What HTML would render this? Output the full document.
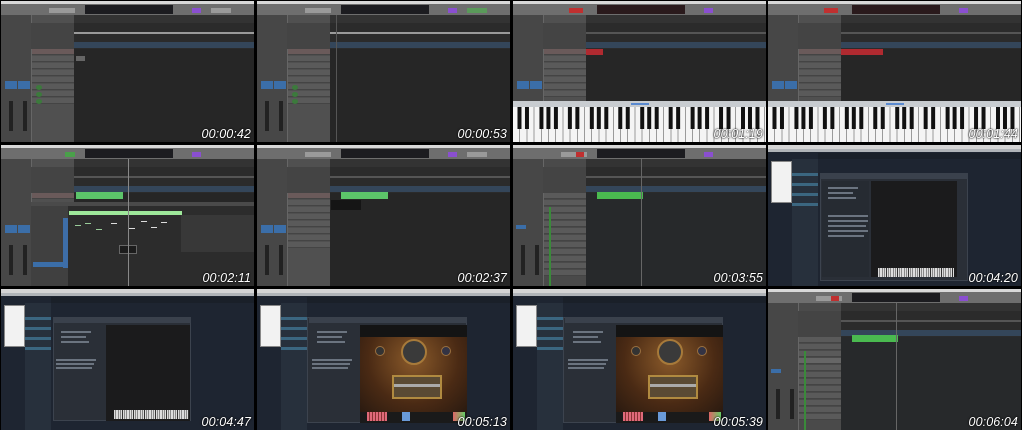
<!DOCTYPE html>
<html><head><meta charset="utf-8"><style>
*{margin:0;padding:0;box-sizing:border-box}
body{width:1022px;height:429px;background:#000;position:relative;overflow:hidden;font-family:"Liberation Sans",sans-serif}
.c{position:absolute;width:253px;height:141px;overflow:hidden;background:#262626}
.a{position:absolute}
.ts{position:absolute;right:3px;bottom:1px;color:#fff;font-style:italic;font-size:12.5px;letter-spacing:0.1px;text-shadow:0 0 2px #000,0 0 1px #000}
.mb{left:0;top:0;width:253px;height:3px;background:#d8d8d8}
.tb{left:0;top:3px;width:253px;height:11px;background:#6e6e6e}
.lcd{left:84px;top:4px;width:88px;height:9px;background:#1c1c20}
.pur{left:191px;top:7px;width:9px;height:5px;background:#8a4fd0}
.tbb{top:7px;height:5px;background:#9a9a9a}
.ins{left:0;top:14px;width:30px;height:127px;background:#474747}
.trk{left:30px;top:14px;width:43px;height:127px;background:#505050;border-left:1px solid #666}
.trh{left:30px;top:22px;width:43px;height:26px;background:#444}
.rul{left:73px;top:14px;width:180px;height:8px;background:#333}
.glo{left:73px;top:22px;width:180px;height:26px;background:#2b2b2b}
.gl1{left:73px;top:31px;width:180px;height:2px;background:#555}
.blu{left:73px;top:41px;width:180px;height:6px;background:#34465a}
.row{left:31px;height:6px;width:42px;background:#5a5a5a;border-bottom:1px solid #444}
.led{left:35px;width:6px;height:5px;border-radius:50%;background:#3c7a3c}
.fad{top:100px;width:4px;height:30px;background:#222}
.bbtn{top:80px;width:12px;height:8px;background:#3b6ea8}
.pia{left:0;top:100px;width:253px;height:41px;background:#c8ccd0}
.keys{left:0;top:106px;width:253px;height:35px;background:
linear-gradient(to right,transparent 0 4.7px,#111 4.7px 8.7px,transparent 8.7px 12px,#111 12px 16px,transparent 16px 26.3px,#111 26.3px 30.3px,transparent 30.3px 33.5px,#111 33.5px 37.5px,transparent 37.5px 40.7px,#111 40.7px 44.7px,transparent 44.7px) 0 0/50.4px 22px repeat-x,
repeating-linear-gradient(to right,#f4f4f4 0 6.2px,#9a9a9a 6.2px 7.2px)}
.k{background:#1e2531}
.kmb{left:0;top:0;width:253px;height:4px;background:#d4d4d4}
.kmb2{left:0;top:4px;width:253px;height:3px;background:#b0b4b8}
.kwh{left:3px;top:16px;width:21px;height:42px;background:#f2f2f2;border:1px solid #888}
.kcol{left:24px;top:14px;width:26px;height:127px;background:#27303c}
.kbar{left:50px;top:8px;width:203px;height:6px;background:#1a2029}
.kmh{left:52px;top:28px;width:148px;height:6px;background:#3a414c}
.kl{height:2px;background:#6b7480}
.kblk{left:103px;top:36px;width:86px;height:96px;background:#1b1b1c}
.kpi{left:110px;top:123px;width:76px;height:9px;background:repeating-linear-gradient(to right,#ddd 0 1.6px,#333 1.6px 2.2px)}
.side{left:24px;width:26px;height:3px;background:#3b6680}
</style></head><body>

<div class="c" style="left:1px;top:1px">
<div class="a mb"></div><div class="a tb"></div><div class="a lcd"></div><div class="a pur"></div>
<div class="a tbb" style="left:48px;width:26px"></div><div class="a tbb" style="left:210px;width:20px"></div>
<div class="a ins"></div><div class="a trk"></div><div class="a trh"></div>
<div class="a rul"></div><div class="a glo"></div><div class="a gl1" style="background:#9a9a9a"></div><div class="a blu"></div>
<div class="a row" style="top:48px;background:#6a5a5a"></div><div class="a row" style="top:55px"></div><div class="a row" style="top:62px"></div><div class="a row" style="top:69px"></div><div class="a row" style="top:76px"></div><div class="a row" style="top:83px"></div><div class="a row" style="top:90px"></div><div class="a row" style="top:97px"></div>
<div class="a led" style="top:84px"></div><div class="a led" style="top:91px"></div><div class="a led" style="top:98px"></div>
<div class="a bbtn" style="left:4px"></div><div class="a bbtn" style="left:17px"></div>
<div class="a fad" style="left:8px"></div><div class="a fad" style="left:22px"></div>
<div class="a" style="left:75px;top:55px;width:9px;height:5px;background:#666"></div>
<div class="ts">00:00:42</div></div>

<div class="c" style="left:257px;top:1px">
<div class="a mb"></div><div class="a tb"></div><div class="a lcd"></div><div class="a pur"></div>
<div class="a tbb" style="left:48px;width:26px"></div><div class="a" style="left:210px;top:7px;width:20px;height:5px;background:#5a9a5a"></div>
<div class="a ins"></div><div class="a trk"></div><div class="a trh"></div>
<div class="a rul"></div><div class="a glo"></div><div class="a gl1" style="background:#9a9a9a"></div><div class="a blu"></div>
<div class="a" style="left:79px;top:14px;width:1px;height:127px;background:#555"></div>
<div class="a row" style="top:48px;background:#6a5a5a"></div><div class="a row" style="top:55px"></div><div class="a row" style="top:62px"></div><div class="a row" style="top:69px"></div><div class="a row" style="top:76px"></div><div class="a row" style="top:83px"></div><div class="a row" style="top:90px"></div><div class="a row" style="top:97px"></div>
<div class="a led" style="top:84px"></div><div class="a led" style="top:91px"></div><div class="a led" style="top:98px"></div>
<div class="a bbtn" style="left:4px"></div><div class="a bbtn" style="left:17px"></div>
<div class="a fad" style="left:8px"></div><div class="a fad" style="left:22px"></div>
<div class="ts">00:00:53</div></div>

<div class="c" style="left:513px;top:1px">
<div class="a mb"></div><div class="a tb"></div><div class="a lcd" style="background:#2a1a1c"></div><div class="a pur"></div>
<div class="a" style="left:56px;top:7px;width:14px;height:5px;background:#c03030"></div>
<div class="a ins"></div><div class="a trk"></div><div class="a trh"></div>
<div class="a rul"></div><div class="a glo"></div><div class="a gl1"></div><div class="a blu"></div>
<div class="a row" style="top:48px;background:#6a5a5a"></div><div class="a row" style="top:55px"></div><div class="a row" style="top:62px"></div><div class="a row" style="top:69px"></div><div class="a row" style="top:76px"></div><div class="a row" style="top:83px"></div><div class="a row" style="top:90px"></div>
<div class="a" style="left:73px;top:48px;width:17px;height:6px;background:#b02a30"></div>
<div class="a bbtn" style="left:4px"></div><div class="a bbtn" style="left:17px"></div>
<div class="a pia"></div><div class="a keys"></div>
<div class="a" style="left:118px;top:102px;width:18px;height:2px;background:#5a8ad0"></div>
<div class="ts">00:01:19</div></div>

<div class="c" style="left:768px;top:1px">
<div class="a mb"></div><div class="a tb"></div><div class="a lcd" style="background:#2a1a1c"></div><div class="a pur"></div>
<div class="a" style="left:56px;top:7px;width:14px;height:5px;background:#c03030"></div>
<div class="a ins"></div><div class="a trk"></div><div class="a trh"></div>
<div class="a rul"></div><div class="a glo"></div><div class="a gl1"></div><div class="a blu"></div>
<div class="a row" style="top:48px;background:#6a5a5a"></div><div class="a row" style="top:55px"></div><div class="a row" style="top:62px"></div><div class="a row" style="top:69px"></div><div class="a row" style="top:76px"></div><div class="a row" style="top:83px"></div><div class="a row" style="top:90px"></div>
<div class="a" style="left:73px;top:48px;width:42px;height:6px;background:#b02a30"></div>
<div class="a bbtn" style="left:4px"></div><div class="a bbtn" style="left:17px"></div>
<div class="a pia"></div><div class="a keys"></div>
<div class="a" style="left:118px;top:102px;width:18px;height:2px;background:#5a8ad0"></div>
<div class="ts">00:01:44</div></div>

<div class="c" style="left:1px;top:145px">
<div class="a mb"></div><div class="a tb"></div><div class="a lcd"></div><div class="a pur"></div>
<div class="a" style="left:64px;top:7px;width:10px;height:5px;background:#4aa04a"></div>
<div class="a ins"></div><div class="a trk"></div><div class="a trh"></div>
<div class="a rul"></div><div class="a glo"></div><div class="a gl1"></div><div class="a blu"></div>
<div class="a row" style="top:48px;background:#6a5a5a"></div>
<div class="a" style="left:75px;top:47px;width:47px;height:7px;background:#5cc46a"></div>
<div class="a" style="left:30px;top:57px;width:223px;height:4px;background:#4a4a4a"></div>
<div class="a" style="left:30px;top:61px;width:37px;height:80px;background:#404040"></div>
<div class="a" style="left:62px;top:73px;width:5px;height:50px;background:#3e6ea8"></div>
<div class="a" style="left:67px;top:61px;width:186px;height:80px;background:#2c2c2c"></div>
<div class="a" style="left:68px;top:66px;width:113px;height:4px;background:#9ee89a"></div>
<div class="a" style="left:180px;top:70px;width:73px;height:37px;background:#383838"></div>
<div class="a" style="left:74px;top:80px;width:6px;height:1px;background:#9c9"></div><div class="a" style="left:84px;top:78px;width:6px;height:1px;background:#9c9"></div>
<div class="a" style="left:95px;top:84px;width:6px;height:1px;background:#9c9"></div><div class="a" style="left:110px;top:78px;width:6px;height:1px;background:#ddd"></div>
<div class="a" style="left:128px;top:83px;width:6px;height:1px;background:#ddd"></div><div class="a" style="left:140px;top:76px;width:6px;height:1px;background:#ddd"></div>
<div class="a" style="left:150px;top:82px;width:6px;height:1px;background:#ddd"></div><div class="a" style="left:160px;top:77px;width:6px;height:1px;background:#ddd"></div>
<div class="a" style="left:118px;top:100px;width:18px;height:9px;background:#1c1c1c;border:1px solid #666"></div>
<div class="a" style="left:127px;top:14px;width:1px;height:127px;background:#888"></div>
<div class="a" style="left:32px;top:117px;width:30px;height:5px;background:#3b6ea8"></div>
<div class="a bbtn" style="left:4px"></div><div class="a bbtn" style="left:17px"></div>
<div class="a fad" style="left:8px"></div><div class="a fad" style="left:22px"></div>
<div class="ts">00:02:11</div></div>

<div class="c" style="left:257px;top:145px">
<div class="a mb"></div><div class="a tb"></div><div class="a lcd"></div><div class="a pur"></div>
<div class="a tbb" style="left:48px;width:26px"></div><div class="a tbb" style="left:210px;width:20px"></div>
<div class="a ins"></div><div class="a trk"></div><div class="a trh"></div>
<div class="a rul"></div><div class="a glo"></div><div class="a gl1"></div><div class="a blu"></div>
<div class="a row" style="top:48px;background:#6a5a5a"></div><div class="a row" style="top:55px"></div><div class="a row" style="top:62px"></div><div class="a row" style="top:69px"></div><div class="a row" style="top:76px"></div><div class="a row" style="top:83px"></div><div class="a row" style="top:90px"></div><div class="a row" style="top:97px"></div>
<div class="a" style="left:84px;top:47px;width:47px;height:7px;background:#5cc46a"></div>
<div class="a" style="left:74px;top:55px;width:30px;height:10px;background:#151515"></div>
<div class="a bbtn" style="left:4px"></div><div class="a bbtn" style="left:17px"></div>
<div class="a fad" style="left:8px"></div><div class="a fad" style="left:22px"></div>
<div class="ts">00:02:37</div></div>

<div class="c" style="left:513px;top:145px;background:#27292b">
<div class="a mb"></div><div class="a tb"></div><div class="a lcd"></div><div class="a pur"></div>
<div class="a tbb" style="left:48px;width:26px"></div><div class="a" style="left:63px;top:7px;width:8px;height:5px;background:#c03030"></div>
<div class="a ins"></div><div class="a trk" style="background:#4a4a4a"></div><div class="a trh"></div>
<div class="a rul"></div><div class="a glo"></div><div class="a gl1"></div><div class="a blu"></div>
<div class="a row" style="top:48px"></div><div class="a row" style="top:55px"></div><div class="a row" style="top:62px"></div><div class="a row" style="top:69px"></div><div class="a row" style="top:76px"></div><div class="a row" style="top:83px"></div><div class="a row" style="top:90px"></div><div class="a row" style="top:97px"></div><div class="a row" style="top:104px"></div><div class="a row" style="top:111px"></div><div class="a row" style="top:118px"></div><div class="a row" style="top:125px"></div>
<div class="a" style="left:36px;top:62px;width:2px;height:79px;background:#3a8a3a"></div>
<div class="a" style="left:84px;top:47px;width:46px;height:7px;background:#4aba50"></div>
<div class="a" style="left:128px;top:14px;width:1px;height:127px;background:#666"></div>
<div class="a bbtn" style="left:3px;width:10px;height:4px"></div>
<div class="a fad" style="left:8px"></div><div class="a fad" style="left:22px"></div>
<div class="ts">00:03:55</div></div>

<div class="c k" style="left:768px;top:145px">
<div class="a kmb"></div><div class="a kmb2"></div><div class="a kbar"></div>
<div class="a kcol"></div><div class="a kwh"></div>
<div class="a side" style="top:28px"></div><div class="a side" style="top:38px"></div><div class="a side" style="top:48px"></div><div class="a side" style="top:58px"></div>
<div class="a" style="left:52px;top:28px;width:148px;height:108px;background:#2a2f37;border:1px solid #3c434e"></div>
<div class="a kmh"></div>
<div class="a" style="left:54px;top:36px;width:47px;height:96px;background:#262b32"></div>
<div class="a kblk"></div><div class="a kpi"></div>
<div class="a kl" style="left:60px;top:42px;width:30px"></div><div class="a kl" style="left:60px;top:47px;width:25px"></div><div class="a kl" style="left:60px;top:52px;width:28px"></div><div class="a kl" style="left:60px;top:70px;width:40px"></div><div class="a kl" style="left:60px;top:75px;width:40px"></div><div class="a kl" style="left:60px;top:80px;width:38px"></div><div class="a kl" style="left:60px;top:85px;width:40px"></div><div class="a kl" style="left:60px;top:90px;width:36px"></div>
<div class="ts">00:04:20</div></div>

<div class="c k" style="left:1px;top:289px">
<div class="a kmb"></div><div class="a kmb2"></div><div class="a kbar"></div>
<div class="a kcol"></div><div class="a kwh"></div>
<div class="a side" style="top:28px"></div><div class="a side" style="top:38px"></div><div class="a side" style="top:48px"></div><div class="a side" style="top:58px"></div>
<div class="a" style="left:52px;top:28px;width:138px;height:104px;background:#2a2f37;border:1px solid #3c434e"></div>
<div class="a kmh" style="width:138px"></div>
<div class="a kblk" style="left:105px;width:84px"></div>
<div class="a kpi" style="left:113px;top:121px;width:75px"></div>
<div class="a kl" style="left:60px;top:42px;width:30px"></div><div class="a kl" style="left:60px;top:47px;width:25px"></div><div class="a kl" style="left:60px;top:52px;width:28px"></div><div class="a kl" style="left:55px;top:70px;width:40px"></div><div class="a kl" style="left:55px;top:74px;width:38px"></div><div class="a kl" style="left:55px;top:78px;width:36px"></div>
<div class="ts">00:04:47</div></div>

<div class="c k" style="left:257px;top:289px">
<div class="a kmb"></div><div class="a kmb2"></div><div class="a kbar"></div>
<div class="a kcol"></div><div class="a kwh"></div>
<div class="a side" style="top:28px"></div><div class="a side" style="top:38px"></div><div class="a side" style="top:48px"></div><div class="a side" style="top:58px"></div>
<div class="a" style="left:50px;top:28px;width:160px;height:106px;background:#2a2f37;border:1px solid #3c434e"></div>
<div class="a kmh" style="width:158px"></div>
<div class="a kl" style="left:60px;top:42px;width:30px"></div><div class="a kl" style="left:60px;top:47px;width:25px"></div><div class="a kl" style="left:60px;top:52px;width:28px"></div><div class="a kl" style="left:55px;top:70px;width:40px"></div><div class="a kl" style="left:55px;top:74px;width:38px"></div><div class="a kl" style="left:55px;top:78px;width:36px"></div>
<div class="a" style="left:103px;top:36px;width:107px;height:12px;background:#141414"></div>
<div class="a" style="left:103px;top:48px;width:107px;height:75px;background:radial-gradient(ellipse at 50% 30%,#8a5a2a,#4a2a14 60%,#2a1a10)"></div>
<div class="a" style="left:144px;top:50px;width:26px;height:26px;border-radius:50%;background:#3a3a3a;border:2px solid #a77a3a"></div>
<div class="a" style="left:118px;top:57px;width:10px;height:10px;border-radius:50%;background:#333;border:1px solid #9a7040"></div>
<div class="a" style="left:184px;top:57px;width:10px;height:10px;border-radius:50%;background:#334;border:1px solid #9a7040"></div>
<div class="a" style="left:135px;top:86px;width:50px;height:24px;background:#5a4a34;border:2px solid #b08a40"></div>
<div class="a" style="left:137px;top:95px;width:46px;height:3px;background:#aaa"></div>
<div class="a" style="left:103px;top:123px;width:107px;height:11px;background:#1a1a1a"></div>
<div class="a" style="left:110px;top:123px;width:20px;height:9px;background:repeating-linear-gradient(to right,#e06a7a 0 2px,#833 2px 3px)"></div>
<div class="a" style="left:145px;top:123px;width:8px;height:9px;background:#6a9ad8"></div>
<div class="a" style="left:196px;top:123px;width:12px;height:9px;background:linear-gradient(to right,#d66,#6c6)"></div>
<div class="ts">00:05:13</div></div>

<div class="c k" style="left:513px;top:289px">
<div class="a kmb"></div><div class="a kmb2"></div><div class="a kbar"></div>
<div class="a kcol"></div><div class="a kwh"></div>
<div class="a side" style="top:28px"></div><div class="a side" style="top:38px"></div><div class="a side" style="top:48px"></div><div class="a side" style="top:58px"></div>
<div class="a" style="left:50px;top:28px;width:160px;height:106px;background:#2a2f37;border:1px solid #3c434e"></div>
<div class="a kmh" style="width:158px"></div>
<div class="a kl" style="left:60px;top:42px;width:30px"></div><div class="a kl" style="left:60px;top:47px;width:25px"></div><div class="a kl" style="left:60px;top:52px;width:28px"></div><div class="a kl" style="left:55px;top:70px;width:40px"></div><div class="a kl" style="left:55px;top:74px;width:38px"></div><div class="a kl" style="left:55px;top:78px;width:36px"></div>
<div class="a" style="left:103px;top:36px;width:107px;height:12px;background:#141414"></div>
<div class="a" style="left:103px;top:48px;width:107px;height:75px;background:radial-gradient(ellipse at 50% 30%,#8a5a2a,#4a2a14 60%,#2a1a10)"></div>
<div class="a" style="left:144px;top:50px;width:26px;height:26px;border-radius:50%;background:#3a3a3a;border:2px solid #a77a3a"></div>
<div class="a" style="left:118px;top:57px;width:10px;height:10px;border-radius:50%;background:#333;border:1px solid #9a7040"></div>
<div class="a" style="left:184px;top:57px;width:10px;height:10px;border-radius:50%;background:#334;border:1px solid #9a7040"></div>
<div class="a" style="left:135px;top:86px;width:50px;height:24px;background:#5a4a34;border:2px solid #b08a40"></div>
<div class="a" style="left:137px;top:95px;width:46px;height:3px;background:#aaa"></div>
<div class="a" style="left:103px;top:123px;width:107px;height:11px;background:#1a1a1a"></div>
<div class="a" style="left:110px;top:123px;width:20px;height:9px;background:repeating-linear-gradient(to right,#e06a7a 0 2px,#833 2px 3px)"></div>
<div class="a" style="left:145px;top:123px;width:8px;height:9px;background:#6a9ad8"></div>
<div class="a" style="left:196px;top:123px;width:12px;height:9px;background:linear-gradient(to right,#d66,#6c6)"></div>
<div class="ts">00:05:39</div></div>

<div class="c" style="left:768px;top:289px;background:#27292b">
<div class="a mb"></div><div class="a tb"></div><div class="a lcd"></div><div class="a pur"></div>
<div class="a tbb" style="left:48px;width:26px"></div><div class="a" style="left:63px;top:7px;width:8px;height:5px;background:#c03030"></div>
<div class="a ins"></div><div class="a trk" style="background:#4a4a4a"></div><div class="a trh"></div>
<div class="a rul"></div><div class="a glo"></div><div class="a gl1"></div><div class="a blu"></div>
<div class="a row" style="top:48px"></div><div class="a row" style="top:55px"></div><div class="a row" style="top:62px"></div><div class="a row" style="top:69px;background:#666"></div><div class="a row" style="top:76px"></div><div class="a row" style="top:83px"></div><div class="a row" style="top:90px"></div><div class="a row" style="top:97px"></div><div class="a row" style="top:104px"></div><div class="a row" style="top:111px"></div><div class="a row" style="top:118px"></div><div class="a row" style="top:125px"></div>
<div class="a" style="left:36px;top:62px;width:2px;height:79px;background:#3a8a3a"></div>
<div class="a" style="left:84px;top:46px;width:46px;height:7px;background:#4aba50"></div>
<div class="a" style="left:128px;top:14px;width:1px;height:127px;background:#666"></div>
<div class="a bbtn" style="left:3px;width:10px;height:4px"></div>
<div class="a fad" style="left:8px"></div><div class="a fad" style="left:22px"></div>
<div class="ts">00:06:04</div></div>

</body></html>
